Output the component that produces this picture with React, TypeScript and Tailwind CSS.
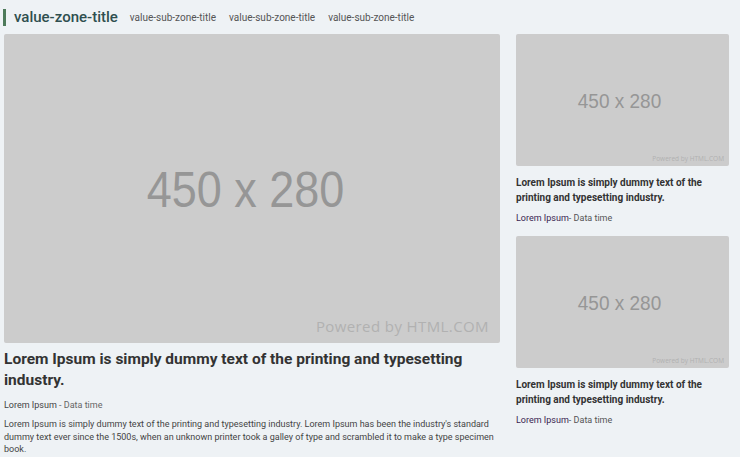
function Placeholder({ big }: { big?: boolean }) {
  return (
    <div
      className={`relative flex items-center justify-center rounded-[2px] bg-[#cccccc] ${
        big ? 'h-[309px]' : 'h-[132px]'
      }`}
    >
      <span
        className={`font-['Liberation_Sans',Arial,sans-serif] text-[#969696] ${
          big ? 'mr-[13px] mt-[3px] scale-y-110 text-[45px]' : 'mr-[6px] mt-[2px] scale-y-110 text-[19px]'
        }`}
      >
        450 x 280
      </span>
      <span
        className={`absolute font-['Open_Sans',sans-serif] text-[#b1b1b1] ${
          big ? 'bottom-[6px] right-[11px] text-[15px] tracking-[0.4px]' : 'bottom-[2px] right-[5px] text-[6.5px]'
        }`}
      >
        Powered by HTML.COM
      </span>
    </div>
  );
}

function SideCard() {
  return (
    <div className="flex flex-col">
      <Placeholder />
      <h3 className="mt-[10px] text-[10px] font-bold leading-[14.5px] text-[#333]">
        Lorem Ipsum is simply dummy text of the printing and typesetting industry.
      </h3>
      <p className="mt-[7px] text-[9px] leading-[12px] text-[#555]">
        <span className="text-[#3a2550]">Lorem Ipsum</span>- Data time
      </p>
    </div>
  );
}

export default function App() {
  return (
    <div className="h-[457px] w-[740px] overflow-hidden bg-[#eef2f5] font-['Roboto',sans-serif]">
      <div className="flex items-center pl-[3px] pt-[9px]">
        <div className="h-[17px] w-[3px] bg-[#4d7a5a]" />
        <h1 className="ml-[8px] text-[15px] font-medium leading-[17px] text-[#2f4f4f]">value-zone-title</h1>
        <div className="ml-[12px] flex gap-[13px] text-[10px] text-[#555]">
          <span>value-sub-zone-title</span>
          <span>value-sub-zone-title</span>
          <span>value-sub-zone-title</span>
        </div>
      </div>

      <div className="mt-[8px] flex gap-[16px] pl-[4px]">
        <div className="flex w-[496px] flex-col">
          <Placeholder big />
          <h2 className="mt-[6px] text-[15.5px] font-bold leading-[21px] text-[#333]">
            Lorem Ipsum is simply dummy text of the printing and typesetting industry.
          </h2>
          <p className="mt-[8px] text-[9px] leading-[12px] text-[#444]">
            Lorem Ipsum <span className="text-[#666]">- Data time</span>
          </p>
          <p className="mt-[7px] text-[9px] leading-[12.5px] text-[#444]">
            Lorem Ipsum is simply dummy text of the printing and typesetting industry. Lorem Ipsum has been the
            industry's standard dummy text ever since the 1500s, when an unknown printer took a galley of type and
            scrambled it to make a type specimen book.
          </p>
        </div>
        <div className="flex w-[213px] flex-col gap-[12px]">
          <SideCard />
          <SideCard />
        </div>
      </div>
    </div>
  );
}
